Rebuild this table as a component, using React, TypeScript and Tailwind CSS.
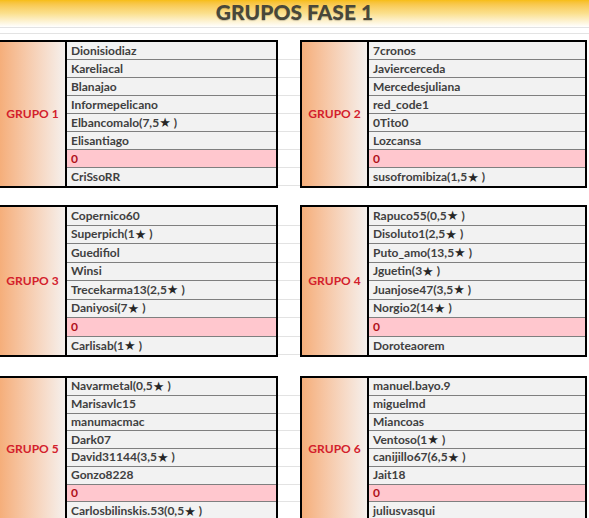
import React from 'react';

interface Group {
  title: string;
  players: string[];
}

const rows: Group[][] = [
  [
    { title: 'GRUPO 1', players: ['Dionisiodiaz', 'Kareliacal', 'Blanajao', 'Informepelicano', 'Elbancomalo(7,5*)', 'Elisantiago', '0', 'CriSsoRR'] },
    { title: 'GRUPO 2', players: ['7cronos', 'Javiercerceda', 'Mercedesjuliana', 'red_code1', '0Tito0', 'Lozcansa', '0', 'susofromibiza(1,5*)'] },
  ],
  [
    { title: 'GRUPO 3', players: ['Copernico60', 'Superpich(1*)', 'Guedifiol', 'Winsi', 'Trecekarma13(2,5*)', 'Daniyosi(7*)', '0', 'Carlisab(1*)'] },
    { title: 'GRUPO 4', players: ['Rapuco55(0,5*)', 'Disoluto1(2,5*)', 'Puto_amo(13,5*)', 'Jguetin(3*)', 'Juanjose47(3,5*)', 'Norgio2(14*)', '0', 'Doroteaorem'] },
  ],
  [
    { title: 'GRUPO 5', players: ['Navarmetal(0,5*)', 'Marisavlc15', 'manumacmac', 'Dark07', 'David31144(3,5*)', 'Gonzo8228', '0', 'Carlosbilinskis.53(0,5*)'] },
    { title: 'GRUPO 6', players: ['manuel.bayo.9', 'miguelmd', 'Miancoas', 'Ventoso(1*)', 'canijillo67(6,5*)', 'Jait18', '0', 'juliusvasqui'] },
  ],
];

// names with a "*" get the black star followed by a small gap
const PlayerName = ({ name }: { name: string }) => {
  if (!name.includes('*')) return <>{name}</>;
  const [before, after] = name.split('*');
  return (
    <>
      {before}
      <span className="font-['DejaVu_Sans',sans-serif] text-[13px] leading-none text-[#262626] mr-[3px]">★</span>
      {after}
    </>
  );
};

const GroupTable = ({ group, left, rowH }: { group: Group; left?: boolean; rowH: string }) => (
  <div className={left ? 'flex w-[278px] border-2 border-l-0 border-black' : 'flex w-[287px] border-2 border-black'}>
    <div className="w-[67px] flex items-center justify-center border-r-2 border-black bg-linear-to-r from-[#f5ae7a] to-[#f5f0ed] text-[12px] font-bold text-[#d3202b]">
      {group.title}
    </div>
    <div className="flex-1 flex flex-col">
      {group.players.map((p, i) => (
        <div
          key={i}
          className={`${rowH} flex items-center pl-[4px] text-[12px] leading-none font-bold ${
            i < 7 ? 'border-b border-[#7f7f7f]' : ''
          } ${p === '0' ? 'bg-[#ffc7ce] text-[#b0101a]' : 'bg-[#f2f2f2] text-[#404040]'}`}
        >
          <PlayerName name={p} />
        </div>
      ))}
    </div>
  </div>
);

const GapColumn = ({ rowH }: { rowH: string }) => (
  <div className="w-[22px] flex flex-col pt-[2px]">
    {Array.from({ length: 8 }).map((_, i) => (
      <div key={i} className={`${rowH} border-b border-[#e3e3e3]`} />
    ))}
  </div>
);

export default function App() {
  const rowHeights = ['h-[18px]', 'h-[18.5px]', 'h-[17.75px]'];
  const gaps = ['h-[17px]', 'h-[19px]'];

  return (
    <div className="w-[589px] h-[518px] overflow-hidden bg-white font-['Lato',sans-serif]">
      <div className="h-[27px] bg-linear-to-b from-[#f7bd12] via-[#fbe08e] to-white flex justify-center">
        <h1 className="mt-[1px] text-[21px] leading-[22px] font-black text-[#48473a] [text-shadow:0_1px_1px_rgba(0,0,0,0.2)]">
          GRUPOS FASE 1
        </h1>
      </div>
      <div className="h-[7px] border-y border-[#e3e3e3]" />
      <div className="h-[6px]" />
      {rows.map((pair, r) => (
        <React.Fragment key={r}>
          <div className="flex">
            <GroupTable group={pair[0]} left rowH={rowHeights[r]} />
            <GapColumn rowH={rowHeights[r]} />
            <GroupTable group={pair[1]} rowH={rowHeights[r]} />
          </div>
          {r < 2 && <div className={gaps[r]} />}
        </React.Fragment>
      ))}
    </div>
  );
}
